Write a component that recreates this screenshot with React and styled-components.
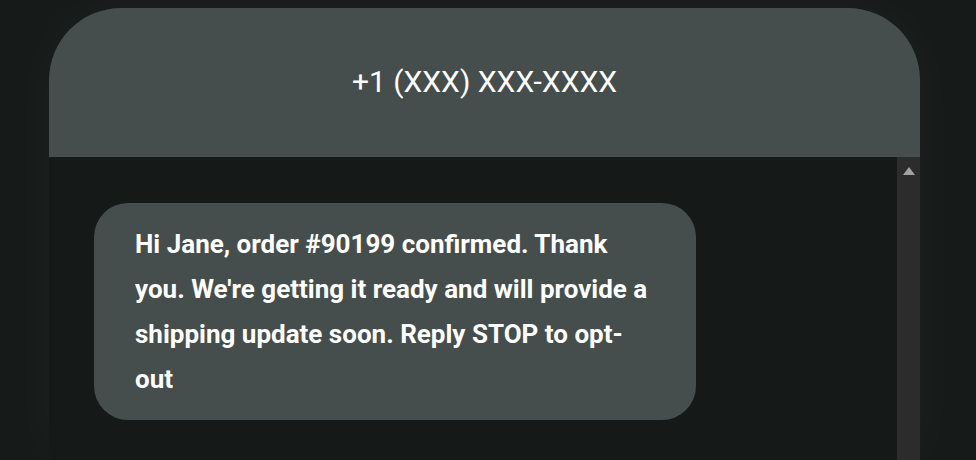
import styled, {createGlobalStyle} from 'styled-components';

const GlobalStyle = createGlobalStyle`
  html, body {
    margin: 0;
    background: #161a19;
    font-family: Roboto, "Liberation Sans", sans-serif;
    overflow: hidden;
  }
`

const Page = styled.div`
  height: 460px;
  padding: 8px 56px 0 49px;
  box-sizing: border-box;
  overflow: hidden;
`

const Phone = styled.div`
  height: 452px;
  display: flex;
  flex-direction: column;
  border-radius: 72px 72px 0 0;
  overflow: hidden;
  background: #151918;
  box-shadow: 0 0 60px rgba(255, 255, 255, 0.035);
`

const Header = styled.div`
  height: 149px;
  flex-shrink: 0;
  box-sizing: border-box;
  padding-bottom: 3px;
  display: flex;
  align-items: center;
  justify-content: center;
  background: #454e4c;
  color: #ffffff;
  font-size: 30px;
`

const Body = styled.div`
  flex: 1;
  display: flex;
`

const Thread = styled.div`
  flex: 1;
  padding: 46px 45px;
`

const Bubble = styled.div`
  width: 515px;
  padding: 19px 46px 18px 41px;
  border-radius: 34px;
  background: #454e4c;
  color: #ffffff;
  font-size: 26px;
  font-weight: 700;
  line-height: 45px;
`

const Scrollbar = styled.div`
  width: 23px;
  background: #2c2c2c;
  display: flex;
  justify-content: center;
  padding-top: 10px;
`

const Arrow = styled.div`
  width: 0;
  height: 0;
  border-left: 6px solid transparent;
  border-right: 6px solid transparent;
  border-bottom: 8px solid #a3a3a3;
`

const App = () => {
  return (
    <Page>
      <GlobalStyle />
      <Phone>
        <Header>+1 (XXX) XXX-XXXX</Header>
        <Body>
          <Thread>
            <Bubble>
              Hi Jane, order #90199 confirmed. Thank you. We're getting it ready and will provide a shipping update soon. Reply STOP to opt-out
            </Bubble>
          </Thread>
          <Scrollbar>
            <Arrow />
          </Scrollbar>
        </Body>
      </Phone>
    </Page>
  )
}

export default App
